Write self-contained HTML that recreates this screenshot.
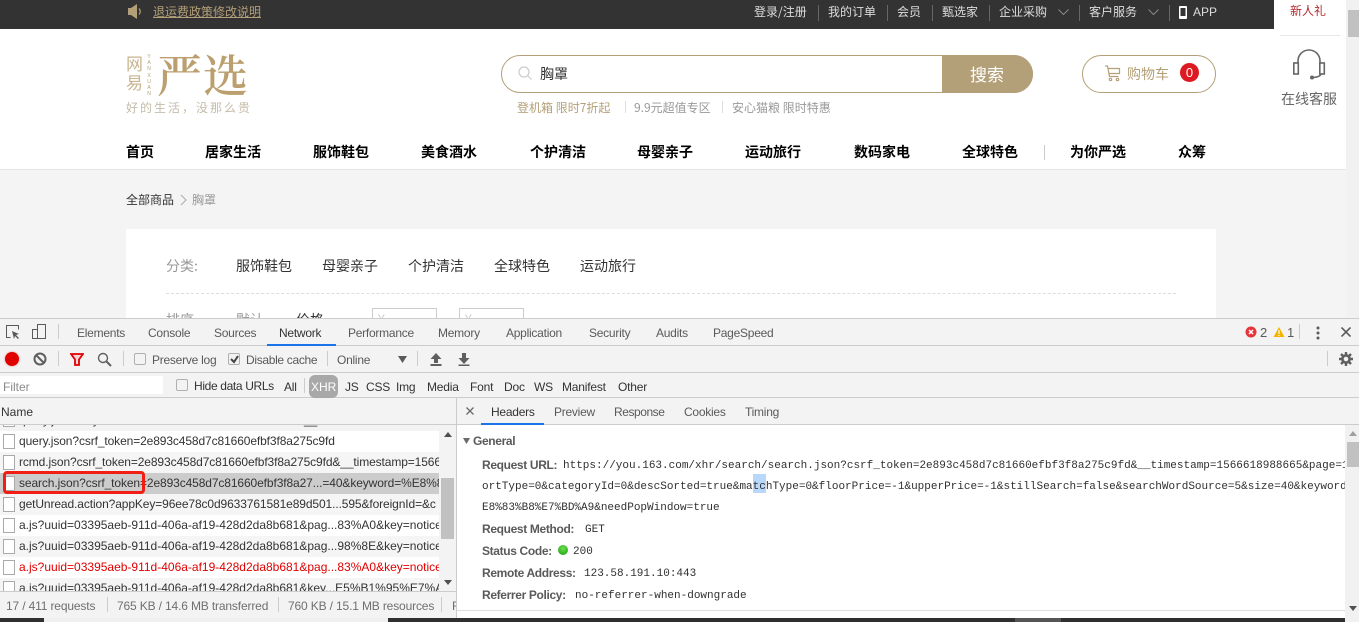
<!DOCTYPE html>
<html><head><meta charset="utf-8">
<style>
html,body{margin:0;padding:0;width:1359px;height:622px;overflow:hidden;background:#f4f4f4}
body{position:relative;font-family:"Liberation Sans","Noto Sans CJK SC",sans-serif;font-size:12px}
.t{position:absolute;white-space:nowrap;line-height:16px;height:16px}
.b{position:absolute}
.cn{font-family:"Noto Sans CJK SC","Liberation Sans",sans-serif}
.nav{font-weight:bold;font-size:14px;color:#000;top:144px;font-family:"Noto Sans CJK SC",sans-serif}
.top{color:#ddd;top:4px;font-size:12px}
.sep{position:absolute;width:1px;background:#666;top:5px;height:16px}
.dt{color:#5a5a5a;top:325px;letter-spacing:-.25px}
.f{color:#333;top:378px;letter-spacing:-.2px}
.st{color:#6f6f6f;top:598px;letter-spacing:-.15px}
.row{position:absolute;left:0;width:439px;height:21px;overflow:hidden;background:#fff}
.row i{position:absolute;left:3px;top:3px;width:10px;height:13px;border:1px solid #aaa;background:#fff}
.row span{position:absolute;left:19px;top:3px;line-height:15px;white-space:nowrap;color:#333}
.row span.n{letter-spacing:-.11px}
.k{font-weight:bold;color:#5a5a5a;left:482px;letter-spacing:-.35px}
.m{font-family:"Liberation Mono",monospace;font-size:11px;color:#303030}
.cb{position:absolute;width:10px;height:10px;border:1px solid #b0b0b0;border-radius:2px;background:#f3f3f3}
.vs{position:absolute;width:1px;background:#ccc}
</style></head><body>

<!-- page -->
<div class="b" style="left:0;top:0;width:1346px;height:29px;background:#333"></div>
<div class="b" style="left:0;top:29px;width:1346px;height:140px;background:#fff"></div>
<div class="b" style="left:0;top:169px;width:1346px;height:1px;background:#e4e4e4"></div>
<div class="b" style="left:1274px;top:0;width:72px;height:169px;background:#fff"></div>
<div class="b" style="left:1346px;top:0;width:13px;height:318px;background:#f1f1f1"></div>
<div class="b" style="left:1348px;top:10px;width:11px;height:27px;background:#c1c1c1"></div>

<svg class="b" style="left:127px;top:4px" width="17" height="15" viewBox="0 0 17 15"><path d="M1 4h3l6-4v15l-6-4H1z" fill="#b4a078"/><path d="M12 4.500q2.500 3 0 6" stroke="#b4a078" stroke-width="1.200" fill="none"/></svg>
<div class="t cn" style="left:153px;top:4px;color:#b4a078;text-decoration:underline">退运费政策修改说明</div>
<div class="t top cn" style="left:754px">登录/注册</div><div class="sep" style="left:818px"></div>
<div class="t top cn" style="left:828px">我的订单</div><div class="sep" style="left:887px"></div>
<div class="t top cn" style="left:897px">会员</div><div class="sep" style="left:932px"></div>
<div class="t top cn" style="left:942px">甄选家</div><div class="sep" style="left:989px"></div>
<div class="t top cn" style="left:999px">企业采购</div>
<svg class="b" style="left:1058px;top:9px" width="11" height="7"><path d="M.5 .5l5 5 5-5" stroke="#888" fill="none"/></svg>
<div class="sep" style="left:1079px"></div>
<div class="t top cn" style="left:1089px">客户服务</div>
<svg class="b" style="left:1148px;top:9px" width="11" height="7"><path d="M.5 .5l5 5 5-5" stroke="#888" fill="none"/></svg>
<div class="sep" style="left:1169px"></div>
<svg class="b" style="left:1179px;top:6px" width="8" height="13"><rect width="8" height="13" rx="1" fill="#fff"/><rect x="1.500" y="2" width="5" height="8" fill="#333"/></svg>
<div class="t top" style="left:1193px">APP</div>
<div class="t cn" style="left:1290px;top:3px;color:#b4282d">新人礼</div>
<div class="b" style="left:1280px;top:35px;width:60px;height:1px;background:#e8e8e8"></div>

<!-- logo -->
<div class="t cn" style="left:126px;top:53px;font-size:17px;line-height:19px;height:40px;color:#c8b48f;width:18px;white-space:normal">网易</div>
<div class="t" style="left:146px;top:54px;font-size:5px;line-height:6.200px;height:44px;width:6px;color:#b4a078;white-space:normal;text-align:center">Y A N X U A N</div>
<div class="t" style="left:157px;top:47px;height:52px;line-height:52px;font-size:45px;font-weight:600;letter-spacing:1px;color:#bb9f6e;font-family:'Noto Serif CJK SC',serif">严选</div>
<div class="t cn" style="left:126px;top:100px;color:#c5bca9;font-size:12px;letter-spacing:2px">好的生活，没那么贵</div>

<!-- search -->
<div class="b" style="left:501px;top:55px;width:530px;height:36px;border:1px solid #b4a078;border-radius:19px;background:#fff"></div>
<div class="b" style="left:942px;top:55px;width:91px;height:38px;background:#b4a078;border-radius:0 19px 19px 0"></div>
<svg class="b" style="left:518px;top:66px" width="15" height="15"><circle cx="6" cy="6" r="5" fill="none" stroke="#ccc" stroke-width="1.200"/><path d="M9.500 9.500l4 4" stroke="#ccc" stroke-width="1.200"/></svg>
<div class="t cn" style="left:540px;top:66px;font-size:14px;color:#333">胸罩</div>
<div class="t cn" style="left:970px;top:65px;font-size:17px;line-height:18px;height:18px;color:#fff">搜索</div>
<div class="t cn" style="left:517px;top:100px;color:#b4a078">登机箱 限时7折起</div>
<div class="b" style="left:625px;top:101px;width:1px;height:12px;background:#ddd"></div>
<div class="t cn" style="left:634px;top:100px;color:#999">9.9元超值专区</div>
<div class="b" style="left:722px;top:101px;width:1px;height:12px;background:#ddd"></div>
<div class="t cn" style="left:732px;top:100px;color:#999">安心猫粮 限时特惠</div>

<!-- cart -->
<div class="b" style="left:1082px;top:55px;width:132px;height:36px;border:1px solid #b4a078;border-radius:19px;background:#fff"></div>
<svg class="b" style="left:1104px;top:65px" width="17" height="17" fill="none" stroke="#b4a078" stroke-width="1.200"><path d="M1 1h2.500l2 10.500h9M4 3.500h11.500v5H5"/><circle cx="6.500" cy="14.500" r="1.200"/><circle cx="13.500" cy="14.500" r="1.200"/></svg>
<div class="t cn" style="left:1127px;top:66px;font-size:14px;color:#b4a078">购物车</div>
<div class="b" style="left:1180px;top:63px;width:19px;height:19px;border-radius:50%;background:#dd1a21;color:#fff;text-align:center;line-height:19px;font-size:13px">0</div>

<!-- headset -->
<svg class="b" style="left:1292px;top:49px" width="34" height="33" fill="none" stroke="#666" stroke-width="1.600"><path d="M6 14V12a11 11 0 0 1 22 0v2"/><rect x="1.800" y="14" width="4.500" height="11"/><rect x="27.800" y="14" width="4.500" height="11"/><path d="M29 25q-1 3-8 3.500"/><circle cx="20" cy="28.500" r="2" fill="#666" stroke="none"/></svg>
<div class="t cn" style="left:1281px;top:91px;font-size:14px;color:#666">在线客服</div>

<!-- nav -->
<div class="t nav" style="left:126px">首页</div>
<div class="t nav" style="left:205px">居家生活</div>
<div class="t nav" style="left:313px">服饰鞋包</div>
<div class="t nav" style="left:421px">美食酒水</div>
<div class="t nav" style="left:530px">个护清洁</div>
<div class="t nav" style="left:637px">母婴亲子</div>
<div class="t nav" style="left:745px">运动旅行</div>
<div class="t nav" style="left:854px">数码家电</div>
<div class="t nav" style="left:962px">全球特色</div>
<div class="b" style="left:1044px;top:145px;width:1px;height:15px;background:#ccc"></div>
<div class="t nav" style="left:1070px">为你严选</div>
<div class="t nav" style="left:1178px">众筹</div>

<!-- breadcrumb -->
<div class="t cn" style="left:126px;top:192px;color:#333">全部商品</div>
<svg class="b" style="left:180px;top:194px" width="8" height="12"><path d="M1 1l5 5-5 5" stroke="#aaa" fill="none"/></svg>
<div class="t cn" style="left:192px;top:192px;color:#999">胸罩</div>

<!-- panel -->
<div class="b" style="left:126px;top:229px;width:1090px;height:89px;background:#fff"></div>
<div class="t cn" style="left:166px;top:258px;font-size:14px;color:#999">分类:</div>
<div class="t cn" style="left:236px;top:258px;font-size:14px;color:#333">服饰鞋包</div>
<div class="t cn" style="left:322px;top:258px;font-size:14px;color:#333">母婴亲子</div>
<div class="t cn" style="left:408px;top:258px;font-size:14px;color:#333">个护清洁</div>
<div class="t cn" style="left:494px;top:258px;font-size:14px;color:#333">全球特色</div>
<div class="t cn" style="left:580px;top:258px;font-size:14px;color:#333">运动旅行</div>
<div class="b" style="left:166px;top:293px;width:1010px;border-top:1px dashed #ddd"></div>
<div class="t cn" style="left:166px;top:312px;font-size:14px;color:#999">排序</div>
<div class="t cn" style="left:236px;top:312px;font-size:14px;color:#999">默认</div>
<div class="t cn" style="left:296px;top:312px;font-size:14px;color:#333">价格</div>
<div class="b" style="left:372px;top:308px;width:63px;height:20px;border:1px solid #ccc;background:#fff"></div>
<div class="b" style="left:459px;top:308px;width:63px;height:20px;border:1px solid #ccc;background:#fff"></div>
<div class="t" style="left:378px;top:311px;color:#ccc">¥</div>
<div class="t" style="left:465px;top:311px;color:#ccc">¥</div>

<!-- devtools -->
<div class="b" style="left:0;top:318px;width:1359px;height:304px;background:#f3f3f3"></div>
<div class="b" style="left:0;top:318px;width:1359px;height:1px;background:#ccc"></div>
<div class="b" style="left:0;top:345px;width:1359px;height:1px;background:#ccc"></div>
<div class="b" style="left:0;top:372px;width:1359px;height:1px;background:#ccc"></div>
<div class="b" style="left:0;top:397px;width:1359px;height:1px;background:#ccc"></div>
<div class="b" style="left:0;top:424px;width:1359px;height:1px;background:#ccc"></div>

<svg class="b" style="left:5px;top:324px" width="16" height="16" fill="none" stroke="#5a5a5a"><path d="M5.500 13.500h-4v-12h12v4"/><path d="M7 7l7 3-3 1 3 3-1 1-3-3-1 3z" fill="#5a5a5a" stroke="none"/></svg>
<svg class="b" style="left:31px;top:324px" width="16" height="16" fill="none" stroke="#5a5a5a"><rect x="6.500" y=".5" width="8" height="14"/><rect x="1.500" y="5.500" width="5" height="9"/></svg>
<div class="vs" style="left:58px;top:324px;height:15px"></div>
<div class="t dt" style="left:77px">Elements</div>
<div class="t dt" style="left:148px">Console</div>
<div class="t dt" style="left:214px">Sources</div>
<div class="t" style="left:279px;top:325px;color:#333;letter-spacing:-.25px">Network</div>
<div class="b" style="left:267px;top:344px;width:69px;height:2px;background:#1a73e8"></div>
<div class="t dt" style="left:348px">Performance</div>
<div class="t dt" style="left:438px">Memory</div>
<div class="t dt" style="left:506px">Application</div>
<div class="t dt" style="left:589px">Security</div>
<div class="t dt" style="left:656px">Audits</div>
<div class="t dt" style="left:713px">PageSpeed</div>

<svg class="b" style="left:1245px;top:326px" width="12" height="12"><circle cx="6" cy="6" r="5.500" fill="#e5353b"/><path d="M4 4l4 4M8 4l-4 4" stroke="#fff" stroke-width="1.500"/></svg>
<div class="t dt" style="left:1260px;font-size:13px">2</div>
<svg class="b" style="left:1273px;top:326px" width="12" height="12"><path d="M6 1l5.500 10H.5z" fill="#f4b400"/><path d="M6 4v4M6 9v1" stroke="#fff" stroke-width="1.200"/></svg>
<div class="t dt" style="left:1287px;font-size:13px">1</div>
<div class="vs" style="left:1299px;top:324px;height:15px"></div>
<svg class="b" style="left:1316px;top:326px" width="4" height="14"><circle cx="2" cy="2" r="1.500" fill="#5a5a5a"/><circle cx="2" cy="7" r="1.500" fill="#5a5a5a"/><circle cx="2" cy="12" r="1.500" fill="#5a5a5a"/></svg>
<svg class="b" style="left:1341px;top:327px" width="10" height="10"><path d="M.5.5l9 9M9.500.5l-9 9" stroke="#5a5a5a" stroke-width="1.600"/></svg>

<!-- row 2 -->
<div class="b" style="left:5px;top:352px;width:14px;height:14px;border-radius:50%;background:#e00000;box-shadow:0 0 2px #f09090"></div>
<svg class="b" style="left:33px;top:352px" width="14" height="14" fill="none" stroke="#5f5f5f" stroke-width="2"><circle cx="7" cy="7" r="5.500"/><path d="M3 3l8 8"/></svg>
<div class="vs" style="left:58px;top:351px;height:15px"></div>
<svg class="b" style="left:70px;top:353px" width="14" height="13"><path d="M1 1h12L9 6.500V12H5V6.500z" fill="#f9d5d5" stroke="#e00000" stroke-width="1.800"/></svg>
<svg class="b" style="left:97px;top:352px" width="15" height="15" fill="none" stroke="#5f5f5f" stroke-width="1.400"><circle cx="6" cy="6" r="4.500"/><path d="M9.500 9.500l4.500 4.500" stroke-width="2"/></svg>
<div class="vs" style="left:123px;top:351px;height:15px"></div>
<div class="cb" style="left:134px;top:353px"></div>
<div class="t dt" style="left:152px;top:352px">Preserve log</div>
<div class="cb" style="left:228px;top:353px"></div>
<svg class="b" style="left:229px;top:354px" width="11" height="10"><path d="M2 5l3 3 4-6" stroke="#444" stroke-width="2" fill="none"/></svg>
<div class="t dt" style="left:246px;top:352px;letter-spacing:-.32px">Disable cache</div>
<div class="vs" style="left:327px;top:351px;height:15px"></div>
<div class="t dt" style="left:337px;top:352px">Online</div>
<svg class="b" style="left:398px;top:356px" width="10" height="7"><path d="M0 0h9l-4.500 7z" fill="#5a5a5a"/></svg>
<div class="vs" style="left:417px;top:351px;height:15px"></div>
<svg class="b" style="left:430px;top:353px" width="12" height="13"><path d="M6 0l5.500 6H8v4H4V6H.5zM.5 11h11v2H.5z" fill="#5f5f5f"/></svg>
<svg class="b" style="left:458px;top:353px" width="12" height="13"><path d="M4 0h4v5h3.500L6 11 .5 5H4zM.5 11.500h11v1.500H.5z" fill="#5f5f5f"/></svg>
<div class="vs" style="left:1327px;top:351px;height:15px"></div>
<svg class="b" style="left:1339px;top:352px" width="14" height="14" viewBox="0 0 14 14"><circle cx="7" cy="7" r="3.600" fill="none" stroke="#5f5f5f" stroke-width="2.600"/><path d="M7 0v3M7 11v3M0 7h3M11 7h3M2 2l2 2M10 10l2 2M12 2l-2 2M4 10l-2 2" stroke="#5f5f5f" stroke-width="2.400"/></svg>

<!-- row 3 -->
<div class="b" style="left:0;top:376px;width:163px;height:18px;background:#fff"></div>
<div class="t" style="left:3px;top:379px;color:#888">Filter</div>
<div class="cb" style="left:176px;top:379px"></div>
<div class="t f" style="left:194px;letter-spacing:-.35px">Hide data URLs</div>
<div class="t f" style="left:284px;top:379px">All</div>
<div class="vs" style="left:304px;top:378px;height:15px"></div>
<div class="b" style="left:309px;top:375px;width:29px;height:23px;background:#a8a8a8;border-radius:6px"></div>
<div class="t" style="left:311px;top:379px;color:#fff">XHR</div>
<div class="t f" style="left:345px;top:379px">JS</div>
<div class="t f" style="left:366px;top:379px">CSS</div>
<div class="t f" style="left:396px;top:379px">Img</div>
<div class="t f" style="left:427px;top:379px">Media</div>
<div class="t f" style="left:470px;top:379px">Font</div>
<div class="t f" style="left:504px;top:379px">Doc</div>
<div class="t f" style="left:534px;top:379px">WS</div>
<div class="t f" style="left:562px;top:379px">Manifest</div>
<div class="t f" style="left:618px;top:379px">Other</div>

<!-- left list -->
<div class="t" style="left:1px;top:404px;color:#333">Name</div>
<div class="b" style="left:0;top:425px;width:439px;height:166px;background:#fff"></div>
<div class="row" style="top:425px;height:6px;background:#f3f3f3"><i style="top:-13px"></i><span style="top:-12px">query.json?key=2e893c458d7c81660efbf3f8a275c9fd__</span></div>
<div class="row" style="top:431px"><i></i><span class="n">query.json?csrf_token=2e893c458d7c81660efbf3f8a275c9fd</span></div>
<div class="row" style="top:452px;background:#f5f5f5"><i></i><span class="n">rcmd.json?csrf_token=2e893c458d7c81660efbf3f8a275c9fd&amp;__timestamp=1566618988665</span></div>
<div class="row" style="top:473px;background:#ccc"><i></i><span class="n">search.json?csrf_token=2e893c458d7c81660efbf3f8a27...=40&amp;keyword=%E8%83%B8%E7</span></div>
<div class="row" style="top:494px;background:#f5f5f5"><i></i><span class="n">getUnread.action?appKey=96ee78c0d9633761581e89d501...595&amp;foreignId=&amp;c</span></div>
<div class="row" style="top:515px"><i></i><span>a.js?uuid=03395aeb-911d-406a-af19-428d2da8b681&amp;pag...83%A0&amp;key=notice</span></div>
<div class="row" style="top:536px;background:#f5f5f5"><i></i><span>a.js?uuid=03395aeb-911d-406a-af19-428d2da8b681&amp;pag...98%8E&amp;key=notice</span></div>
<div class="row" style="top:557px"><i></i><span style="color:#e00000">a.js?uuid=03395aeb-911d-406a-af19-428d2da8b681&amp;pag...83%A0&amp;key=notice</span></div>
<div class="row" style="top:578px;height:13px;background:#f5f5f5"><i></i><span>a.js?uuid=03395aeb-911d-406a-af19-428d2da8b681&amp;key...E5%B1%95%E7%A4</span></div>
<div class="b" style="left:3px;top:471px;width:136px;height:17px;border:3px solid #f01e14;border-radius:4px"></div>

<div class="b" style="left:439px;top:425px;width:17px;height:166px;background:#f3f3f3"></div>
<div class="b" style="left:441px;top:478px;width:13px;height:61px;background:#c1c1c1"></div>
<svg class="b" style="left:444px;top:432px" width="8" height="5"><path d="M4 0l4 5H0z" fill="#505050"/></svg>
<svg class="b" style="left:444px;top:580px" width="8" height="5"><path d="M0 0h8L4 5z" fill="#505050"/></svg>
<div class="b" style="left:456px;top:398px;width:1px;height:220px;background:#ccc"></div>

<!-- status bar -->
<div class="b" style="left:0;top:591px;width:456px;height:1px;background:#ccc"></div>
<div class="t st" style="left:6px">17 / 411 requests</div>
<div class="vs" style="left:107px;top:597px;height:15px"></div>
<div class="t st" style="left:117px">765 KB / 14.6 MB transferred</div>
<div class="vs" style="left:278px;top:597px;height:15px"></div>
<div class="t st" style="left:288px">760 KB / 15.1 MB resources</div>
<div class="vs" style="left:441px;top:597px;height:15px"></div>
<div class="t st" style="left:452px;width:4px;overflow:hidden">F</div>

<!-- right pane -->
<div class="b" style="left:457px;top:425px;width:888px;height:185px;background:#fff"></div>
<div class="b" style="left:457px;top:610px;width:888px;height:1px;background:#ddd"></div>
<div class="b" style="left:457px;top:611px;width:888px;height:7px;background:#fff"></div>
<div class="b" style="left:1345px;top:425px;width:14px;height:197px;background:#f1f1f1"></div>
<div class="b" style="left:1347px;top:442px;width:12px;height:25px;background:#c1c1c1"></div>
<svg class="b" style="left:1349px;top:431px" width="8" height="5"><path d="M4 0l4 5H0z" fill="#a0a0a0"/></svg>
<svg class="b" style="left:1349px;top:606px" width="8" height="5"><path d="M0 0h8L4 5z" fill="#505050"/></svg>

<svg class="b" style="left:466px;top:407px" width="8" height="8"><path d="M.5.5l7 7M7.500.5l-7 7" stroke="#6a6a6a" stroke-width="1.300"/></svg>
<div class="t" style="left:491px;top:404px;color:#333;letter-spacing:-.25px">Headers</div>
<div class="b" style="left:481px;top:423px;width:63px;height:2px;background:#1a73e8"></div>
<div class="t dt" style="left:554px;top:404px">Preview</div>
<div class="t dt" style="left:614px;top:404px;letter-spacing:-.45px">Response</div>
<div class="t dt" style="left:684px;top:404px">Cookies</div>
<div class="t dt" style="left:745px;top:404px">Timing</div>

<svg class="b" style="left:463px;top:438px" width="7" height="6"><path d="M0 0h7L3.500 6z" fill="#6a6a6a"/></svg>
<div class="t k" style="left:473px;top:433px">General</div>
<div class="b" style="left:753px;top:474px;width:13px;height:19px;background:#b8d7f9"></div>
<div class="t k" style="top:457px">Request URL:</div>
<div class="b" style="left:457px;top:450px;width:888px;height:70px;overflow:hidden">
<div class="t m" style="left:106px;top:8px">https://you.163.com/xhr/search/search.json?csrf_token=2e893c458d7c81660efbf3f8a275c9fd&amp;__timestamp=1566618988665&amp;page=1</div>
<div class="t m" style="left:25px;top:29px">ortType=0&amp;categoryId=0&amp;descSorted=true&amp;matchType=0&amp;floorPrice=-1&amp;upperPrice=-1&amp;stillSearch=false&amp;searchWordSource=5&amp;size=40&amp;keyword</div>
<div class="t m" style="left:25px;top:50px">E8%83%B8%E7%BD%A9&amp;needPopWindow=true</div>
</div>
<div class="t k" style="top:521px">Request Method:</div><div class="t m" style="left:585px;top:522px">GET</div>
<div class="t k" style="top:543px">Status Code:</div>
<div class="b" style="left:558px;top:545px;width:10px;height:10px;border-radius:50%;background:radial-gradient(circle at 50% 35%,#6fe04f,#119a0c)"></div>
<div class="t m" style="left:573px;top:544px">200</div>
<div class="t k" style="top:565px">Remote Address:</div><div class="t m" style="left:584px;top:566px">123.58.191.10:443</div>
<div class="t k" style="top:587px">Referrer Policy:</div><div class="t m" style="left:575px;top:588px">no-referrer-when-downgrade</div>

<!-- bottom strip -->
<div class="b" style="left:0;top:618px;width:1345px;height:4px;background:#2f2f2f"></div>
<div class="b" style="left:44px;top:618px;width:344px;height:4px;background:#efefef"></div>
<div class="b" style="left:1015px;top:618px;width:46px;height:4px;background:#555"></div>
</body></html>
